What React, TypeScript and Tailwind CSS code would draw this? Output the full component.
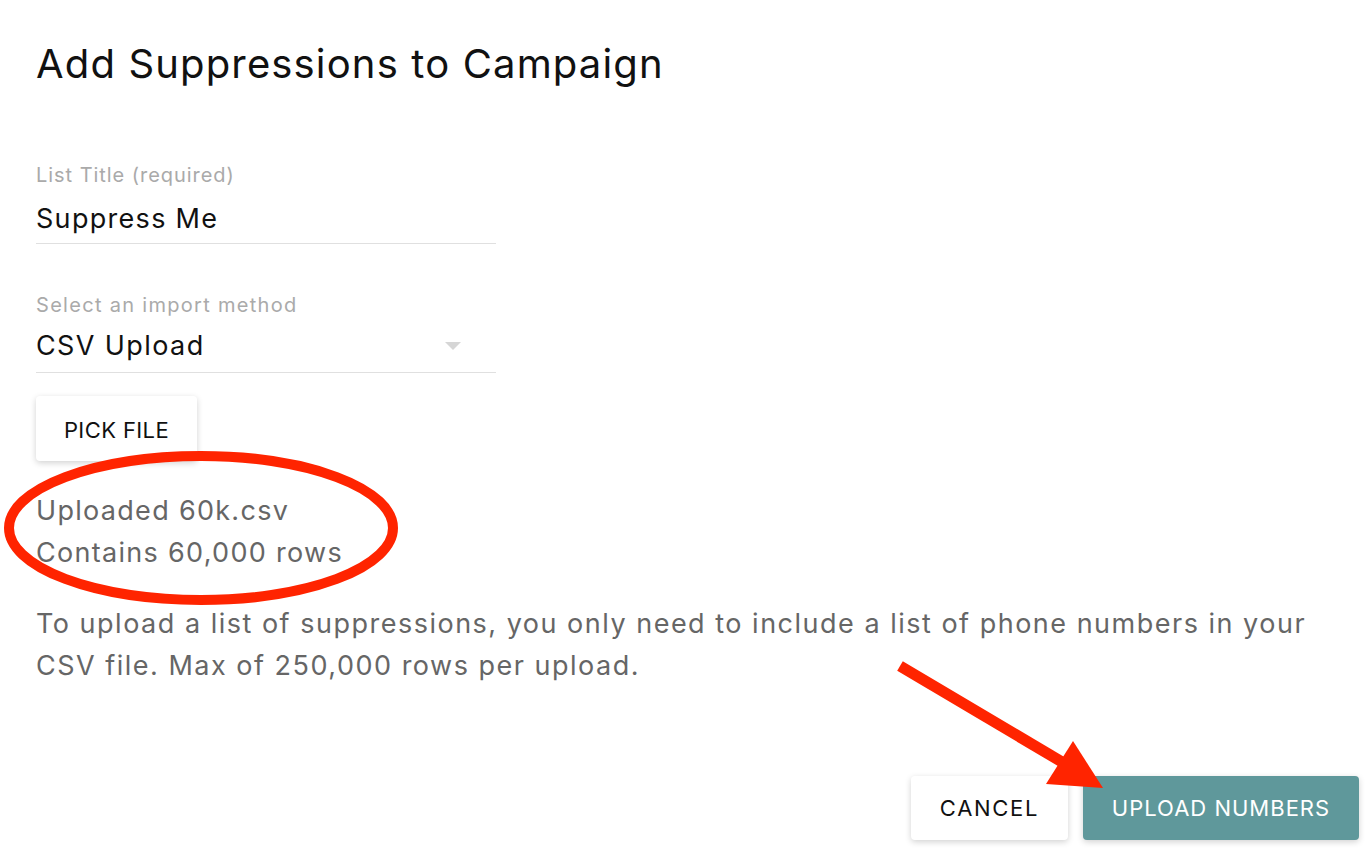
import React from "react";

const font = { fontFamily: "Inter, 'Noto Sans', sans-serif" };

export default function App() {
  return (
    <div className="relative w-[1370px] h-[854px] bg-white overflow-hidden" style={font}>
      <div className="flex flex-col pl-[36px] pr-[11px]">
        <h1 className="mt-[40px] h-[48px] text-[40px] leading-[48px] font-normal text-[#111] tracking-[1.15px]">
          Add Suppressions to Campaign
        </h1>

        <div className="mt-[74px] w-[460px] flex flex-col">
          <label className="h-[26px] text-[20px] leading-[26px] text-[#aaaaaa] tracking-[0.95px]">List Title (required)</label>
          <div className="mt-[14px] h-[42px] text-[27px] leading-[34px] text-[#111] tracking-[1.3px] border-b border-[#e0e0e0]">
            Suppress Me
          </div>

          <label className="mt-[48px] h-[26px] text-[20px] leading-[26px] text-[#aaaaaa] tracking-[1.3px]">Select an import method</label>
          <div className="mt-[11px] h-[44px] flex items-start justify-between border-b border-[#e0e0e0]">
            <span className="text-[27px] leading-[34px] text-[#111] tracking-[1.4px]">CSV Upload</span>
            <svg width="16" height="8" viewBox="0 0 16 8" className="mt-[13px] mr-[35px]">
              <path d="M0 0 L16 0 L8 8 Z" fill="#d6d6d6" />
            </svg>
          </div>
        </div>

        <div className="mt-[23px]">
          <button className="w-[161px] h-[65px] bg-white rounded-[4px] shadow-[0_2px_6px_rgba(0,0,0,0.18)] text-[22px] tracking-[0.4px] text-[#111] pt-[3px]">
            PICK FILE
          </button>
        </div>

        <div className="mt-[29px] text-[27px] leading-[42px] text-[#666666] tracking-[1.3px]">
          <div>Uploaded 60k.csv</div>
          <div>Contains 60,000 rows</div>
        </div>

        <p className="mt-[29px] text-[27px] leading-[42px] text-[#666666] tracking-[1.5px] whitespace-nowrap">
          To upload a list of suppressions, you only need to include a list of phone numbers in your
          <br />
          CSV file. Max of 250,000 rows per upload.
        </p>

        <div className="mt-[89px] flex justify-end gap-[15px]">
          <button className="w-[157px] h-[64px] bg-white rounded-[4px] shadow-[0_2px_6px_rgba(0,0,0,0.18)] text-[22px] tracking-[1.7px] text-[#111]">
            CANCEL
          </button>
          <button className="w-[276px] h-[64px] bg-[#5f989b] rounded-[4px] shadow-[0_2px_6px_rgba(0,0,0,0.18)] text-[22px] tracking-[1px] text-white">
            UPLOAD NUMBERS
          </button>
        </div>
      </div>

      <svg className="absolute left-0 top-0 pointer-events-none" width="1370" height="854" viewBox="0 0 1370 854">
        <ellipse cx="201" cy="528" rx="192" ry="72" fill="none" stroke="#ff2400" strokeWidth="10" />
        <line x1="900" y1="666" x2="1062" y2="762" stroke="#ff2400" strokeWidth="11" />
        <polygon points="1103,788 1046,784 1073,741" fill="#ff2400" />
      </svg>
    </div>
  );
}
